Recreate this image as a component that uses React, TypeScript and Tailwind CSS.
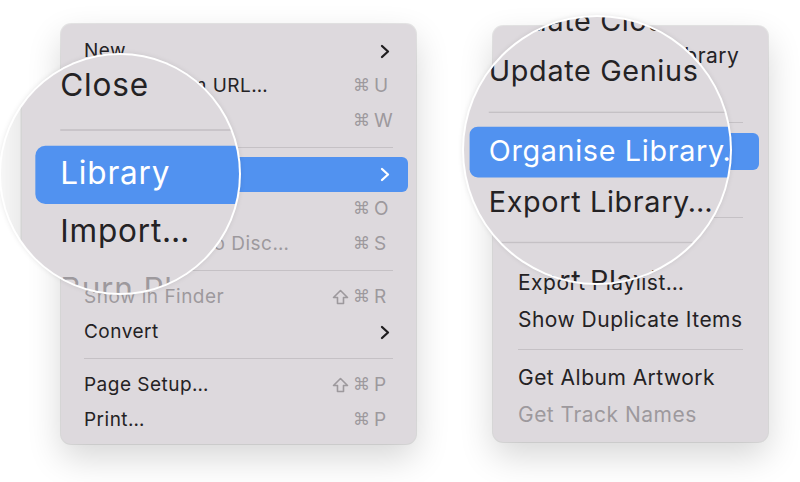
import React from 'react';

type Entry =
  | 'sep'
  | {
      label: string;
      mods?: string[];
      keyName?: string;
      sub?: boolean;
      dim?: boolean;
      hl?: boolean;
    };

const LEFT_ITEMS: Entry[] = [
  { label: 'New', sub: true },
  { label: 'Open Stream URL…', mods: ['⌘'], keyName: 'U' },
  { label: 'Close', mods: ['⌘'], keyName: 'W' },
  'sep',
  { label: 'Library', sub: true, hl: true },
  { label: 'Import…', mods: ['⌘'], keyName: 'O' },
  { label: 'Burn Playlist to Disc…', mods: ['⌘'], keyName: 'S', dim: true },
  'sep',
  { label: 'Show in Finder', mods: ['⇧', '⌘'], keyName: 'R', dim: true },
  { label: 'Convert', sub: true },
  'sep',
  { label: 'Page Setup…', mods: ['⇧', '⌘'], keyName: 'P' },
  { label: 'Print…', mods: ['⌘'], keyName: 'P' },
];

const RIGHT_ITEMS: Entry[] = [
  { label: 'Update Cloud Library' },
  { label: 'Update Genius' },
  'sep',
  { label: 'Organise Library…', hl: true },
  { label: 'Export Library…' },
  'sep',
  { label: 'Import Playlist…' },
  { label: 'Export Playlist…' },
  { label: 'Show Duplicate Items' },
  'sep',
  { label: 'Get Album Artwork' },
  { label: 'Get Track Names', dim: true },
];

type Look = { box: string; row: string; sep: string };

const LEFT_LOOK: Look = {
  box: 'w-[355px] h-[420px] pt-[9.5px] px-[8px] rounded-[10px] tracking-[0.03em]',
  row: 'h-[35px] pl-[15px] pr-[17px] rounded-[6px] text-[19px]',
  sep: 'h-[18px] px-[15px]',
};

const RIGHT_LOOK: Look = {
  box: 'w-[275px] h-[416px] pt-[11.5px] pl-[11px] pr-[9px] rounded-[10px] tracking-[0.03em]',
  row: 'h-[37px] pl-[14px] pr-[16px] rounded-[6px] text-[21px]',
  sep: 'h-[21px] pl-[14px] pr-[16px]',
};

function Chevron({ light }: { light?: boolean }) {
  return (
    <svg width="10" height="15" viewBox="0 0 10 15" className="mr-[1px]">
      <path
        d="M2 2 L8 7.5 L2 13"
        fill="none"
        stroke={light ? '#ffffff' : '#1f1d1f'}
        strokeWidth="2.3"
        strokeLinecap="round"
        strokeLinejoin="round"
      />
    </svg>
  );
}

// hollow shift arrow, DejaVu's glyph is too small next to ⌘
function ShiftKey() {
  return (
    <svg width="17" height="16" viewBox="0 0 17 16" className="mr-[1px]">
      <path
        d="M8.5 1.5 L15.5 8.5 H11.5 V14.5 H5.5 V8.5 H1.5 Z"
        fill="none"
        stroke="#9d999d"
        strokeWidth="1.6"
        strokeLinejoin="round"
      />
    </svg>
  );
}

function Menu({ items, look }: { items: Entry[]; look: Look }) {
  return (
    <div
      className={`${look.box} bg-[#ddd9dd] shadow-[0_14px_34px_rgba(0,0,0,0.16),0_0_0_1px_rgba(0,0,0,0.09)] font-['Inter','DejaVu_Sans',sans-serif] flex flex-col`}
    >
      {items.map((it, i) => {
        if (it === 'sep') {
          return (
            <div key={i} className={`${look.sep} flex items-center`}>
              <div className="h-px w-full bg-[#c5c1c5]" />
            </div>
          );
        }
        const text = it.hl ? 'text-white' : it.dim ? 'text-[#9d999d]' : 'text-[#242224]';
        return (
          <div
            key={i}
            className={`${look.row} flex items-center justify-between ${it.hl ? 'bg-[#5192f0]' : ''}`}
          >
            <span className={`${text} whitespace-nowrap`}>{it.label}</span>
            {it.sub && <Chevron light={it.hl} />}
            {it.keyName && (
              <span className="flex items-center text-[#9d999d] tracking-normal">
                {it.mods?.map((m, j) =>
                  m === '⇧' ? (
                    <ShiftKey key={j} />
                  ) : (
                    <span key={j} className="font-['DejaVu_Sans',sans-serif] text-[17px] ml-[3px]">
                      {m}
                    </span>
                  ),
                )}
                <span className="w-[17px] ml-[4px] text-left">{it.keyName}</span>
              </span>
            )}
          </div>
        );
      })}
    </div>
  );
}

export default function App() {
  return (
    <div className="w-[800px] h-[482px] bg-white overflow-hidden flex items-start pl-[61px] pt-[24px]">
      {/* left menu: File */}
      <div className="relative">
        <Menu items={LEFT_ITEMS} look={LEFT_LOOK} />
        <div className="absolute left-[-60px] top-[31px] w-[238px] h-[238px] rounded-full overflow-hidden bg-white ring-2 ring-white shadow-[0_0_6px_rgba(0,0,0,0.18)]">
          <div className="absolute left-[60px] top-[-31px] origin-[59px_150px] scale-[1.66]">
            <Menu items={LEFT_ITEMS} look={LEFT_LOOK} />
          </div>
        </div>
      </div>

      {/* right menu: Library submenu */}
      <div className="relative ml-[77px] mt-[2px]">
        <Menu items={RIGHT_ITEMS} look={RIGHT_LOOK} />
        <div className="absolute left-[-29px] top-[-9px] w-[266px] h-[266px] rounded-full overflow-hidden bg-white ring-2 ring-white shadow-[0_0_6px_rgba(0,0,0,0.18)]">
          <div className="absolute left-[29px] top-[9px] origin-[104px_124px] scale-[1.37]">
            <Menu items={RIGHT_ITEMS} look={RIGHT_LOOK} />
          </div>
        </div>
      </div>
    </div>
  );
}
